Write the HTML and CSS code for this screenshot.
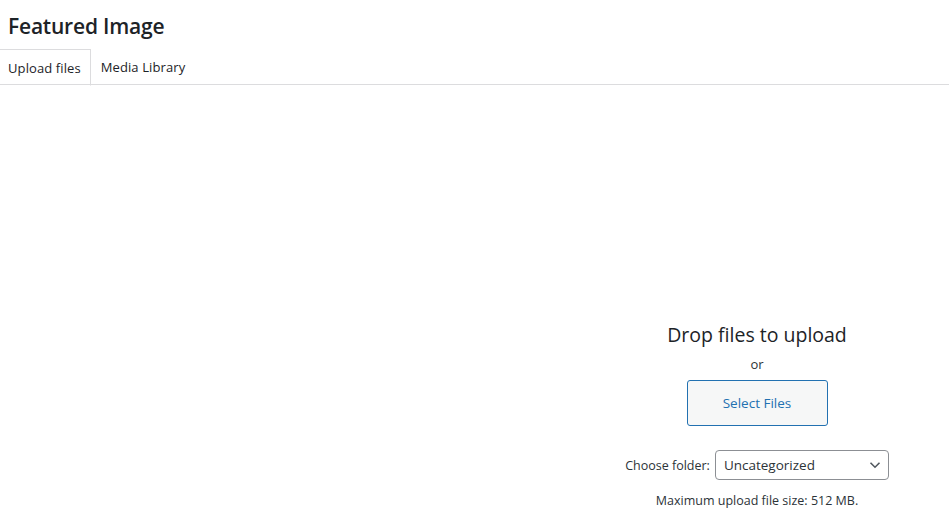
FILE: index.html
```html
<!DOCTYPE html>
<html>
<head>
<meta charset="utf-8">
<link rel="stylesheet" href="styles.css">
</head>
<body>
<div class="modal">
  <h1 class="title">Featured Image</h1>
  <div class="tabs">
    <div class="tab active">Upload files</div>
    <div class="tab">Media Library</div>
  </div>
  <div class="uploader">
    <div class="drop">
      <h2 class="drop-title">Drop files to upload</h2>
      <p class="or">or</p>
      <button class="select-btn">Select Files</button>
      <div class="folder">
        <label class="folder-label">Choose folder:</label>
        <div class="select">
          <span>Uncategorized</span>
          <svg class="chev" width="14" height="14" viewBox="0 0 14 14"><path d="M2.5 4.8 L7 9.2 L11.5 4.8" fill="none" stroke="#50575e" stroke-width="1.6"/></svg>
        </div>
      </div>
      <p class="max">Maximum upload file size: 512 MB.</p>
    </div>
  </div>
</div>
</body>
</html>
```

FILE: styles.css
```css
html, body {
  margin: 0;
  padding: 0;
  background: #fff;
}
body {
  font-family: "Open Sans", "Noto Sans", sans-serif;
  color: #1d2327;
}
.modal {
  width: 949px;
  height: 527px;
  overflow: hidden;
}
.title {
  margin: 0;
  padding: 0 8px;
  height: 49px;
  line-height: 52px;
  font-size: 21px;
  font-weight: 600;
  letter-spacing: -0.2px;
}
.tabs {
  display: flex;
  height: 35px;
  border-bottom: 1px solid #dcdcde;
}
.tab {
  padding: 0 8px;
  line-height: 37px;
  font-size: 13px;
  letter-spacing: 0.1px;
  color: #1d2327;
}
.tab.active {
  border: 1px solid #dcdcde;
  border-left: none;
  border-bottom: 1px solid #fff;
  padding-right: 9px;
  height: 35px;
  line-height: 36px;
}
.tab + .tab {
  padding-left: 10px;
}
.uploader {
  display: flex;
  padding-left: 567px;
  padding-top: 236px;
}
.drop {
  width: 380px;
  flex-shrink: 0;
  display: flex;
  flex-direction: column;
  align-items: center;
}
.drop-title {
  margin: 0;
  font-size: 19.5px;
  font-weight: 400;
  line-height: 28px;
}
.or {
  margin: 6px 0 0;
  font-size: 13px;
  line-height: 18px;
  color: #2c3338;
}
.select-btn {
  margin-top: 7px;
  width: 141px;
  height: 46px;
  border: 1px solid #2271b1;
  border-radius: 3px;
  background: #f6f7f7;
  color: #2271b1;
  font-family: inherit;
  font-size: 13.5px;
  padding: 0;
}
.folder {
  margin-top: 24px;
  display: flex;
  align-items: center;
  gap: 5px;
}
.folder-label {
  font-size: 12.5px;
  color: #2c3338;
}
.select {
  display: flex;
  align-items: center;
  justify-content: space-between;
  padding: 0 6px 0 8px;
  box-sizing: border-box;
  width: 174px;
  height: 30px;
  border: 1px solid #8c8f94;
  border-radius: 4px;
  font-size: 13.5px;
  color: #2c3338;
}
.chev {
  display: block;
}
.max {
  margin: 12px 0 0;
  font-size: 12.5px;
  color: #2c3338;
}
```
